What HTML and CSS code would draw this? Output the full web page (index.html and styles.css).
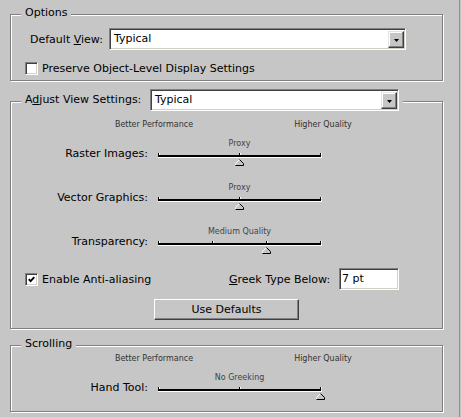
FILE: index.html
```html
<!DOCTYPE html>
<html>
<head>
<meta charset="utf-8">
<link rel="stylesheet" href="styles.css">
</head>
<body>
<div class="page">
  <section class="group g-options">
    <div class="legend">Options</div>
    <div class="view-row">
      <span class="lbl-view">Default <u>V</u>iew:</span>
      <div class="select sel-view">
        <span class="sel-text">Typical</span>
        <span class="drop"><svg width="5" height="3" viewBox="0 0 5 3"><polygon points="0,0 5,0 2.5,3" fill="#000"/></svg></span>
      </div>
    </div>
    <div class="check-row">
      <span class="check"></span>
      <span>Preserve Object-Level Display Settings</span>
    </div>
  </section>

  <section class="group g-adjust">
    <div class="legend legend-adjust">
      <span class="lbl-adjust">A<u>d</u>just View Settings:</span>
      <div class="select sel-adjust">
        <span class="sel-text">Typical</span>
        <span class="drop"><svg width="5" height="3" viewBox="0 0 5 3"><polygon points="0,0 5,0 2.5,3" fill="#000"/></svg></span>
      </div>
    </div>
    <div class="scale-head">
      <span class="sh-left">Better Performance</span>
      <span class="sh-right">Higher Quality</span>
    </div>

    <div class="slider-row">
      <span class="slabel">Raster Images:</span>
      <div class="slider">
        <div class="caption">Proxy</div>
        <div class="ticks"><i></i><i></i><i></i></div>
        <div class="track"></div>
        <svg class="thumb" style="margin-left:77px" width="9" height="7" viewBox="0 0 9 7"><polygon points="4.5,0.5 8.5,4.5 8.5,6.5 0.5,6.5 0.5,4.5" fill="#c6c6c6"/><polyline points="0.5,6 0.5,4.5 4.5,0.5" fill="none" stroke="#fff"/><polyline points="4.5,0.5 8.5,4.5 8.5,6.5 0.5,6.5" fill="none" stroke="#000"/></svg>
      </div>
    </div>

    <div class="slider-row next">
      <span class="slabel">Vector Graphics:</span>
      <div class="slider">
        <div class="caption">Proxy</div>
        <div class="ticks"><i></i><i></i><i></i></div>
        <div class="track"></div>
        <svg class="thumb" style="margin-left:77px" width="9" height="7" viewBox="0 0 9 7"><polygon points="4.5,0.5 8.5,4.5 8.5,6.5 0.5,6.5 0.5,4.5" fill="#c6c6c6"/><polyline points="0.5,6 0.5,4.5 4.5,0.5" fill="none" stroke="#fff"/><polyline points="4.5,0.5 8.5,4.5 8.5,6.5 0.5,6.5" fill="none" stroke="#000"/></svg>
      </div>
    </div>

    <div class="slider-row next">
      <span class="slabel">Transparency:</span>
      <div class="slider">
        <div class="caption">Medium Quality</div>
        <div class="ticks"><i></i><i></i><i></i><i></i></div>
        <div class="track"></div>
        <svg class="thumb" style="margin-left:104px" width="9" height="7" viewBox="0 0 9 7"><polygon points="4.5,0.5 8.5,4.5 8.5,6.5 0.5,6.5 0.5,4.5" fill="#c6c6c6"/><polyline points="0.5,6 0.5,4.5 4.5,0.5" fill="none" stroke="#fff"/><polyline points="4.5,0.5 8.5,4.5 8.5,6.5 0.5,6.5" fill="none" stroke="#000"/></svg>
      </div>
    </div>

    <div class="aa-row">
      <div class="aa-left">
        <span class="check checked"><svg width="7" height="7" viewBox="0 0 7 7"><polyline points="0.8,3.2 2.6,5.2 6.3,1.2" fill="none" stroke="#000" stroke-width="1.9"/></svg></span>
        <span>Enable Anti-aliasing</span>
      </div>
      <span class="lbl-greek"><u>G</u>reek Type Below:</span>
      <div class="textbox">7 pt</div>
    </div>

    <div class="btn-row">
      <div class="button">Use Defaults</div>
    </div>
  </section>

  <section class="group g-scroll">
    <div class="legend">Scrolling</div>
    <div class="scale-head">
      <span class="sh-left">Better Performance</span>
      <span class="sh-right">Higher Quality</span>
    </div>
    <div class="slider-row">
      <span class="slabel">Hand Tool:</span>
      <div class="slider">
        <div class="caption">No Greeking</div>
        <div class="ticks"><i></i><i></i><i></i></div>
        <div class="track"></div>
        <svg class="thumb" style="margin-left:158px" width="9" height="7" viewBox="0 0 9 7"><polygon points="4.5,0.5 8.5,4.5 8.5,6.5 0.5,6.5 0.5,4.5" fill="#c6c6c6"/><polyline points="0.5,6 0.5,4.5 4.5,0.5" fill="none" stroke="#fff"/><polyline points="4.5,0.5 8.5,4.5 8.5,6.5 0.5,6.5" fill="none" stroke="#000"/></svg>
      </div>
    </div>
  </section>
</div>
</body>
</html>
```

FILE: styles.css
```css
html, body {
  margin: 0;
  padding: 0;
  background: #c6c6c6;
}

.page {
  box-sizing: border-box;
  width: 460px;
  height: 417px;
  padding: 14px 0 0 10px;
  border-right: 1px solid #8e8e8e;
  font-family: "DejaVu Sans", sans-serif;
  font-size: 11px;
  color: #000;
  overflow: hidden;
}

u { text-decoration: underline; text-underline-offset: 1px; }

.group {
  box-sizing: border-box;
  width: 433px;
  border: 1px solid #808080;
  box-shadow: inset 1px 1px 0 #fff, 1px 1px 0 #fff;
}

.g-options { padding-bottom: 5px; }
.g-adjust { margin-top: 20px; padding-bottom: 8px; }
.g-scroll { margin-top: 16px; padding-bottom: 11px; }

.legend {
  width: fit-content;
  margin: -9px 0 0 10px;
  padding: 0 4px;
  height: 14px;
  line-height: 14px;
  background: #c6c6c6;
  position: relative;
}

.legend-adjust {
  margin-top: -13px;
  height: 22px;
  display: flex;
  align-items: center;
}

.lbl-adjust { width: 125px; line-height: 14px; }

.view-row {
  margin-top: 8px;
  padding-left: 19px;
  display: flex;
  align-items: center;
}

.lbl-view { width: 79px; }

.select {
  box-sizing: border-box;
  height: 22px;
  border: 1px solid;
  border-color: #808080 #fff #fff #808080;
  box-shadow: inset 1px 1px 0 #404040, inset -1px -1px 0 #d4d0c8;
  background: #fff;
  display: flex;
  padding-left: 4px;
}

.sel-view { width: 297px; }
.sel-adjust { width: 249px; }

.sel-text { line-height: 20px; }

.drop {
  box-sizing: border-box;
  margin: 2px 1px 0 auto;
  width: 16px;
  height: 17px;
  background: #c6c6c6;
  border: 1px solid;
  border-color: #e4e4e4 #404040 #404040 #e4e4e4;
  box-shadow: inset -1px -1px 0 #808080, inset 1px 1px 0 #fff;
  display: flex;
  align-items: center;
  justify-content: center;
}

.drop svg { display: block; margin-top: 1px; }

.check-row {
  margin-top: 12px;
  padding-left: 14px;
  height: 13px;
  display: flex;
  align-items: center;
  gap: 4px;
}

.check {
  box-sizing: border-box;
  width: 13px;
  height: 13px;
  border: 1px solid;
  border-color: #808080 #fff #fff #808080;
  box-shadow: inset 1px 1px 0 #404040, inset -1px -1px 0 #d4d0c8;
  background: #fff;
  display: flex;
  align-items: center;
  justify-content: center;
  flex: none;
}

.check svg { display: block; }

.scale-head {
  margin-top: 9px;
  height: 10px;
  display: flex;
  font-size: 8px;
  line-height: 10px;
  color: #333;
}

.g-scroll .scale-head { margin-top: 3px; }

.sh-left { width: 100px; margin-left: 93px; text-align: center; }
.sh-right { width: 100px; margin-left: 69px; text-align: center; }

.slider-row {
  margin-top: 9px;
  display: flex;
}

.slider-row.next { margin-top: 17px; }

.slabel {
  width: 137px;
  margin-top: 8px;
  line-height: 14px;
  text-align: right;
  margin-right: 10px;
}

.slider {
  width: 163px;
  height: 27px;
}

.caption {
  height: 10px;
  line-height: 10px;
  font-size: 8px;
  text-align: center;
  color: #444;
  white-space: nowrap;
}

.ticks {
  margin-top: 4px;
  height: 2px;
  display: flex;
  justify-content: space-between;
}

.ticks i {
  width: 1px;
  height: 2px;
  background: #000;
  box-shadow: 1px 0 0 #fff;
}

.track {
  height: 2px;
  background: #000;
  border-top: 0;
  box-shadow: 0 1px 0 #fff, 1px 1px 0 #fff;
}

.thumb {
  display: block;
  margin-top: 2px;
}

.aa-row {
  margin-top: 14px;
  padding-left: 14px;
  height: 22px;
  display: flex;
  align-items: center;
}

.aa-left {
  width: 204px;
  display: flex;
  align-items: center;
  gap: 4px;
}

.lbl-greek { width: 110px; }

.textbox {
  box-sizing: border-box;
  width: 60px;
  height: 22px;
  border: 1px solid;
  border-color: #808080 #fff #fff #808080;
  box-shadow: inset 1px 1px 0 #404040, inset -1px -1px 0 #d4d0c8;
  background: #fff;
  padding-left: 2px;
  line-height: 20px;
}

.btn-row {
  margin-top: 9px;
  padding-left: 143px;
}

.button {
  box-sizing: border-box;
  width: 145px;
  height: 21px;
  border: 1px solid;
  border-color: #fff #404040 #404040 #fff;
  box-shadow: inset -1px -1px 0 #808080;
  background: #c6c6c6;
  text-align: center;
  line-height: 19px;
}
```
